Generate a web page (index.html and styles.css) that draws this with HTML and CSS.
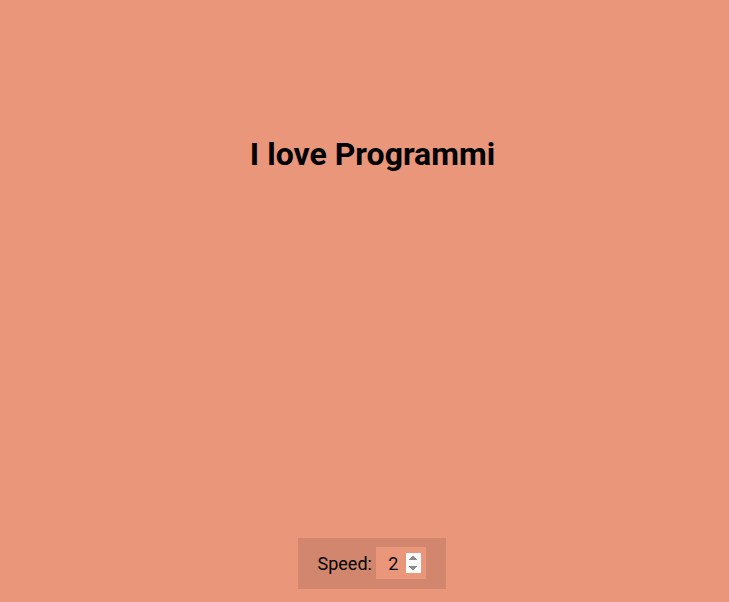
FILE: index.html
```html
<!DOCTYPE html>
<html lang="en">
<head>
<meta charset="UTF-8">
<title>Auto Text Effect</title>
<link rel="stylesheet" href="styles.css">
</head>
<body>
  <h1 class="text">I love Programmi</h1>
  <div class="speed">
    <label for="speed">Speed:</label>
    <input type="number" name="speed" id="speed" value="2" min="1" max="10" step="1">
  </div>
</body>
</html>
```
FILE: styles.css
```css
* { box-sizing: border-box; }
html { margin: 0; padding: 0; overflow: hidden; background-color: darksalmon; }
body {
  margin: 0 0 0 8px;
  padding: 0;
  width: 729px;
  background-color: darksalmon;
  font-family: Roboto, "Liberation Sans", sans-serif;
  height: 602px;
  display: flex;
  flex-direction: column;
  align-items: center;
  overflow: hidden;
}
.text {
  font-size: 32px;
  font-weight: 700;
  margin: 136px 0 0 0;
  line-height: 37px;
}
.speed {
  margin-top: auto;
  margin-bottom: 13px;
  margin-right: 2px;
  background-color: rgba(0, 0, 0, 0.1);
  padding: 9px 18px 10px 20px;
  font-size: 18px;
  display: flex;
  align-items: center;
  height: 51px;
  width: 148px;
}
.speed label { margin-right: 4px; }
.speed input {
  width: 50px;
  height: 32px;
  padding: 5px;
  font-size: 18px;
  font-family: Roboto, "Liberation Sans", sans-serif;
  background-color: darksalmon;
  border: none;
  text-align: center;
}
.speed input::-webkit-inner-spin-button,
.speed input::-webkit-outer-spin-button {
  opacity: 1;
}
```
